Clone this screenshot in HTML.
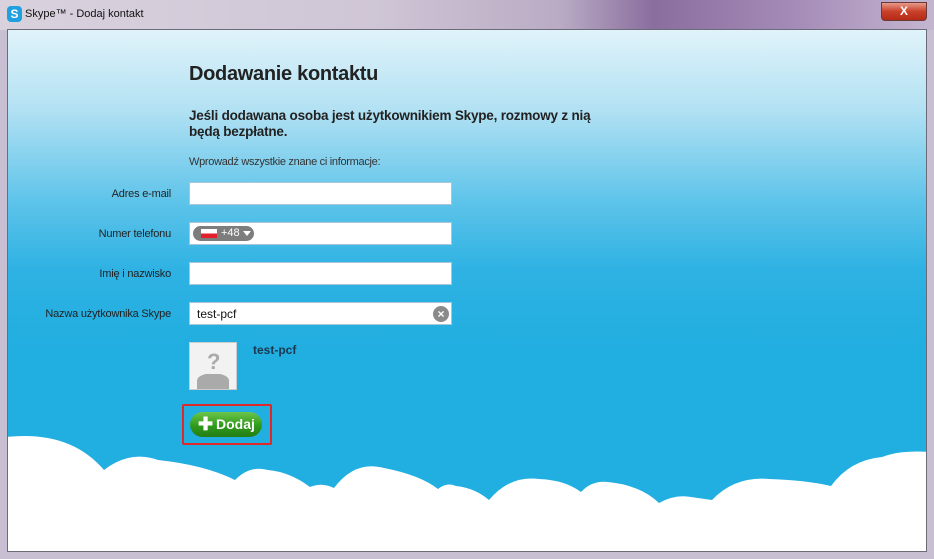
<!DOCTYPE html>
<html><head><meta charset="utf-8"><style>
*{margin:0;padding:0;box-sizing:border-box}
body{width:934px;height:559px;overflow:hidden;background:#c9bfd2;font-family:"Liberation Sans",sans-serif;position:relative}
.tb{position:absolute;left:0;top:0;width:934px;height:30px;background:linear-gradient(90deg,#d9d2dd 0%,#cfc6d6 40%,#b9abc4 60%,#8a6e9e 70%,#a58bb8 85%,#c4b6cf 100%)}
.ttl{position:absolute;left:25px;top:8px;font-size:11px;color:#111}
.sk{position:absolute;left:7px;top:6px;width:15px;height:16px;border-radius:4px;background:#1fa0e0;color:#fff;font-size:12px;font-weight:bold;text-align:center;line-height:16px}
.x{position:absolute;left:881px;top:2px;width:46px;height:19px;border-radius:0 0 4px 4px;background:linear-gradient(#e89a8a,#c9402a 50%,#b52a14);border:1px solid #6a3a3a;color:#fff;font-weight:bold;font-size:12px;text-align:center;line-height:17px}
.c{position:absolute;left:7px;top:29px;width:920px;height:523px;background:linear-gradient(#e0f3fa 0px,#b2e1f3 80px,#5fc4ea 170px,#2eb2e3 240px,#21aee0 320px);overflow:hidden;border:1px solid #6b6b7a}
.abs{position:absolute}
.h1{left:181px;top:33px;font-size:20px;font-weight:bold;color:#222;letter-spacing:-0.3px}
.h2{left:181px;top:78px;font-size:13.5px;font-weight:bold;color:#222;line-height:16px;width:430px;letter-spacing:-0.2px}
.info{left:181px;top:126px;font-size:11px;color:#333;letter-spacing:-0.3px}
.lbl{font-size:11px;color:#222;text-align:right;width:160px;left:3px;letter-spacing:-0.2px}
.in{left:181px;width:263px;height:23px;background:#fff;border:1px solid #a9c6d6}
</style></head><body>
<div class="tb"><div class="sk">S</div><div class="ttl">Skype™ - Dodaj kontakt</div><div class="x">X</div></div>
<div class="c">
<div class="abs h1">Dodawanie kontaktu</div>
<div class="abs h2">Jeśli dodawana osoba jest użytkownikiem Skype, rozmowy z nią będą bezpłatne.</div>
<div class="abs info">Wprowadź wszystkie znane ci informacje:</div>
<div class="abs lbl" style="top:158px">Adres e-mail</div>
<div class="abs in" style="top:152px"></div>
<div class="abs lbl" style="top:198px">Numer telefonu</div>
<div class="abs in" style="top:192px"><div style="position:absolute;left:3px;top:3px;width:61px;height:15px;border-radius:8px;background:#7d7d7d;color:#fff;font-size:11px;line-height:15px"><span style="position:absolute;left:8px;top:3px;width:16px;height:9px;background:linear-gradient(#fff 50%,#e0202a 50%)"></span><span style="position:absolute;left:28px">+48</span><span style="position:absolute;left:50px;top:5px;border:4px solid transparent;border-top:5px solid #fff"></span></div></div>
<div class="abs lbl" style="top:238px">Imię i nazwisko</div>
<div class="abs in" style="top:232px"></div>
<div class="abs lbl" style="top:278px">Nazwa użytkownika Skype</div>
<div class="abs in" style="top:272px"><span style="position:absolute;left:7px;top:4px;font-size:12px;color:#111">test-pcf</span><span style="position:absolute;right:2px;top:3px;width:16px;height:16px;border-radius:50%;background:#8a8a8a;color:#fff;font-size:12px;font-weight:bold;text-align:center;line-height:16px">×</span></div>
<div class="abs" style="left:181px;top:312px;width:48px;height:48px;background:#f2f2f2;border:1px solid #ccc"><svg width="46" height="46"><text x="17" y="26" font-size="22" font-weight="bold" fill="#aaa" font-family="Liberation Sans">?</text><path d="M7 46 V38 Q7 33 16 31 H30 Q39 33 39 38 V46Z" fill="#aaa"/></svg></div>
<div class="abs" style="left:245px;top:313px;font-size:12px;font-weight:bold;color:#1b3850">test-pcf</div>
<div class="abs" style="left:174px;top:374px;width:90px;height:41px;border:2px solid #e02828;border-radius:2px"></div>
<div class="abs" style="left:182px;top:382px;width:72px;height:25px;border-radius:13px;background:linear-gradient(#6cc64a,#2f9a1c 55%,#237e14);color:#fff;font-size:14px;font-weight:bold;line-height:25px"><span style="position:absolute;left:8px;top:0;font-size:18px">✚</span><span style="position:absolute;left:26px">Dodaj</span></div>
<svg class="abs" style="left:-8px;top:-30px" width="934" height="559"><path d="M6 437 Q70 430 104 470 Q130 450 158 460 Q205 465 235 480 Q250 465 268 470 Q290 472 310 487 Q322 482 334 488 Q355 460 384 468 Q420 475 438 489 Q447 482 456 486 Q475 488 489 500 Q510 475 539 479 Q565 480 581 492 Q592 480 608 482 Q640 485 659 503 Q675 494 691 497 L712 500 Q735 476 769 479 Q805 480 831 486 Q850 460 882 457 Q900 450 930 452 V560 H6Z" fill="#fff"/></svg>
</div>
</body></html>
